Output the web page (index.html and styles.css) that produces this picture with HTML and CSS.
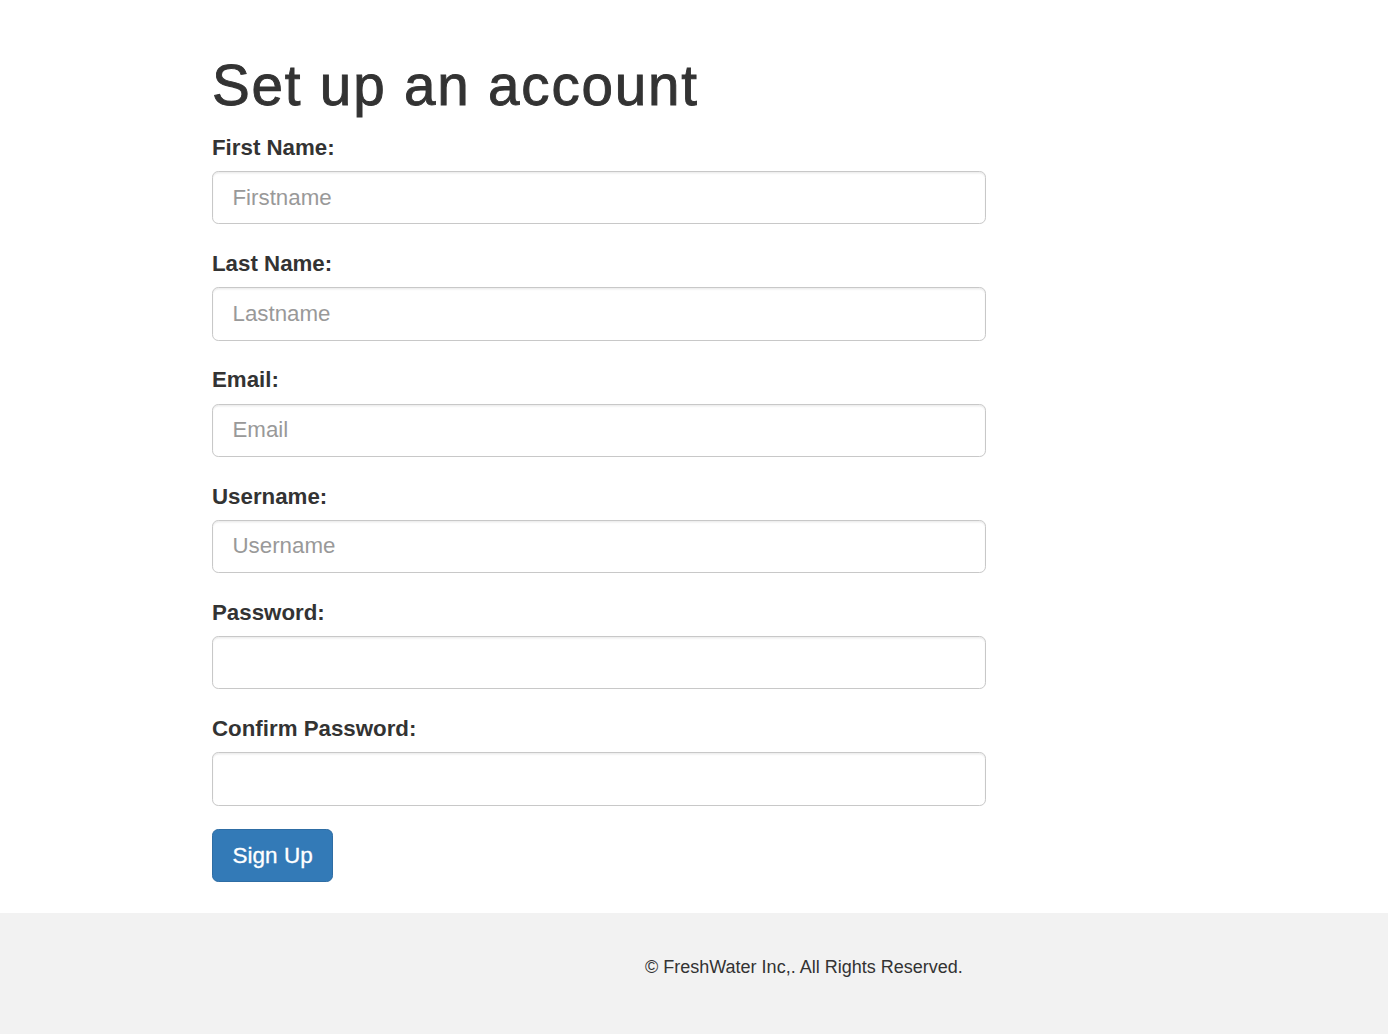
FILE: index.html
```html
<!DOCTYPE html>
<html lang="en">
<head>
<meta charset="utf-8">
<title>Set up an account</title>
<link rel="stylesheet" href="styles.css">
</head>
<body>
<main class="container">
  <h1 class="title">Set up an account</h1>
  <form class="signup">
    <div class="form-group">
      <label class="form-label" for="fn">First Name:</label>
      <input class="form-control" id="fn" type="text" placeholder="Firstname">
    </div>
    <div class="form-group">
      <label class="form-label" for="ln">Last Name:</label>
      <input class="form-control" id="ln" type="text" placeholder="Lastname">
    </div>
    <div class="form-group">
      <label class="form-label" for="em">Email:</label>
      <input class="form-control" id="em" type="email" placeholder="Email">
    </div>
    <div class="form-group">
      <label class="form-label" for="un">Username:</label>
      <input class="form-control" id="un" type="text" placeholder="Username">
    </div>
    <div class="form-group">
      <label class="form-label" for="pw">Password:</label>
      <input class="form-control" id="pw" type="password">
    </div>
    <div class="form-group">
      <label class="form-label" for="cpw">Confirm Password:</label>
      <input class="form-control" id="cpw" type="password">
    </div>
    <button class="btn-primary" type="submit">Sign Up</button>
  </form>
</main>
<footer class="footer">
  <p class="footer-text">© FreshWater Inc,. All Rights Reserved.</p>
</footer>
</body>
</html>
```

FILE: styles.css
```css
html, body {
  margin: 0;
  padding: 0;
  background: #fff;
}

body {
  font-family: "Liberation Sans", Helvetica, Arial, sans-serif;
  color: #333;
  font-size: 22px;
  line-height: 1.42857;
  min-height: 1034px;
  display: flex;
  flex-direction: column;
}

.container {
  padding: 55px 0 0 212px;
  width: 774px;
}

.title {
  margin: 0 0 14.5px;
  font-size: 56.6px;
  line-height: 1.1;
  font-weight: normal;
  letter-spacing: 1.8px;
  -webkit-text-stroke: 0.9px #333;
  color: #333;
}

.signup {
  margin: 0 0 31px;
}

.form-group {
  margin-bottom: 23.57px;
}

.form-label {
  display: block;
  font-weight: bold;
  font-size: 22.3px;
  line-height: 31.43px;
  margin-bottom: 7.86px;
  color: #333;
}

.form-control {
  display: block;
  box-sizing: border-box;
  width: 774px;
  height: 53.4px;
  padding: 9.4px 19.5px;
  font-family: inherit;
  font-size: 22.3px;
  line-height: 31.43px;
  color: #555;
  background: #fff;
  border: 1.6px solid #c8c8c8;
  border-radius: 6.3px;
  box-shadow: inset 0 1.5px 1.5px rgba(0, 0, 0, 0.075);
  outline: none;
}

.form-control::placeholder {
  color: #999;
  opacity: 1;
}

.btn-primary {
  display: inline-block;
  box-sizing: border-box;
  height: 52.5px;
  padding: 8.7px 19.6px;
  font-family: inherit;
  font-size: 22.5px;
  line-height: 31.43px;
  color: #fff;
  -webkit-text-stroke: 0.3px #fff;
  background: #337ab7;
  border: 1.6px solid #2e6da4;
  border-radius: 6.3px;
  cursor: pointer;
}

.footer {
  flex: 1;
  background: #f2f2f2;
  padding: 42px 0 0 645px;
}

.footer-text {
  margin: 0;
  font-size: 18px;
  line-height: 25.7px;
  color: #333;
}
```
